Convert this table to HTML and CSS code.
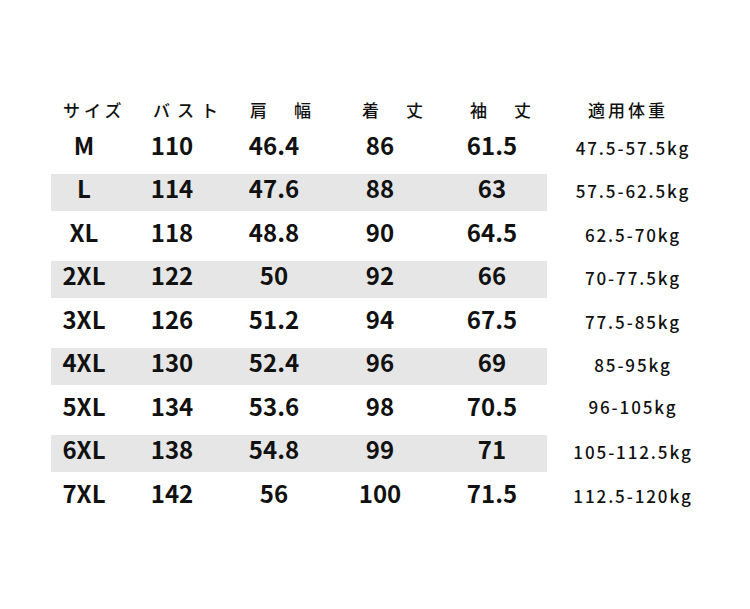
FILE: index.html
```html
<!DOCTYPE html>
<html lang="ja">
<head>
<meta charset="utf-8">
<title>サイズ表</title>
<link rel="stylesheet" href="styles.css">
</head>
<body>
<div class="chart">
  <div class="head">
    <div class="band">
      <div class="h h1">サイズ</div>
      <div class="h h2">バスト</div>
      <div class="h h3">肩　幅</div>
      <div class="h h4">着　丈</div>
      <div class="h h5">袖　丈</div>
    </div>
    <div class="h h6">適用体重</div>
  </div>
  <div class="rows">
    <div class="row"><div class="band"><div>M</div><div>110</div><div>46.4</div><div>86</div><div>61.5</div></div><div class="w">47.5-57.5kg</div></div>
    <div class="row alt"><div class="band"><div>L</div><div>114</div><div>47.6</div><div>88</div><div>63</div></div><div class="w">57.5-62.5kg</div></div>
    <div class="row"><div class="band"><div>XL</div><div>118</div><div>48.8</div><div>90</div><div>64.5</div></div><div class="w">62.5-70kg</div></div>
    <div class="row alt"><div class="band"><div>2XL</div><div>122</div><div>50</div><div>92</div><div>66</div></div><div class="w">70-77.5kg</div></div>
    <div class="row"><div class="band"><div>3XL</div><div>126</div><div>51.2</div><div>94</div><div>67.5</div></div><div class="w">77.5-85kg</div></div>
    <div class="row alt"><div class="band"><div>4XL</div><div>130</div><div>52.4</div><div>96</div><div>69</div></div><div class="w">85-95kg</div></div>
    <div class="row"><div class="band"><div>5XL</div><div>134</div><div>53.6</div><div>98</div><div>70.5</div></div><div class="w up">96-105kg</div></div>
    <div class="row alt"><div class="band"><div>6XL</div><div>138</div><div>54.8</div><div>99</div><div>71</div></div><div class="w">105-112.5kg</div></div>
    <div class="row"><div class="band"><div>7XL</div><div>142</div><div>56</div><div>100</div><div>71.5</div></div><div class="w">112.5-120kg</div></div>
  </div>
</div>
</body>
</html>
```
FILE: styles.css
```css
html, body {
  margin: 0;
  padding: 0;
  background: #ffffff;
}
body {
  width: 750px;
  height: 609px;
  overflow: hidden;
  font-family: "Noto Sans CJK JP", "Noto Sans", sans-serif;
  color: #111111;
}
.chart {
  padding-top: 98px;
  padding-left: 51px;
}
.head {
  display: flex;
  height: 24px;
  margin-bottom: 8.5px;
}
.band {
  display: grid;
  grid-template-columns: 66px 110px 94px 118px 106px;
  width: 496px;
  flex: none;
}
.h {
  font-size: 17px;
  line-height: 24px;
  font-weight: 500;
  white-space: nowrap;
}
.h1 { padding-left: 12px; letter-spacing: 4px; }
.h2 { padding-left: 36px; letter-spacing: 7px; }
.h3 { padding-left: 23px; letter-spacing: 5px; }
.h4 { padding-left: 41px; letter-spacing: 5px; }
.h5 { padding-left: 31px; letter-spacing: 5px; }
.h6 { padding-left: 41px; letter-spacing: 3px; width: 172px; }
.rows {
  display: flex;
  flex-direction: column;
  gap: 6.5px;
}
.row {
  display: flex;
  height: 37px;
}
.row .band > div {
  text-align: center;
  font-size: 24px;
  font-weight: 700;
  line-height: 27px;
  padding-bottom: 10px;
  white-space: nowrap;
}
.row.alt .band {
  background: #e6e6e6;
}
.w {
  width: 172px;
  text-align: center;
  font-size: 17px;
  font-weight: 500;
  letter-spacing: 1.9px;
  line-height: 34px;
  padding-bottom: 3px;
  white-space: nowrap;
}
.w.up {
  line-height: 30px;
  padding-bottom: 7px;
}
```
